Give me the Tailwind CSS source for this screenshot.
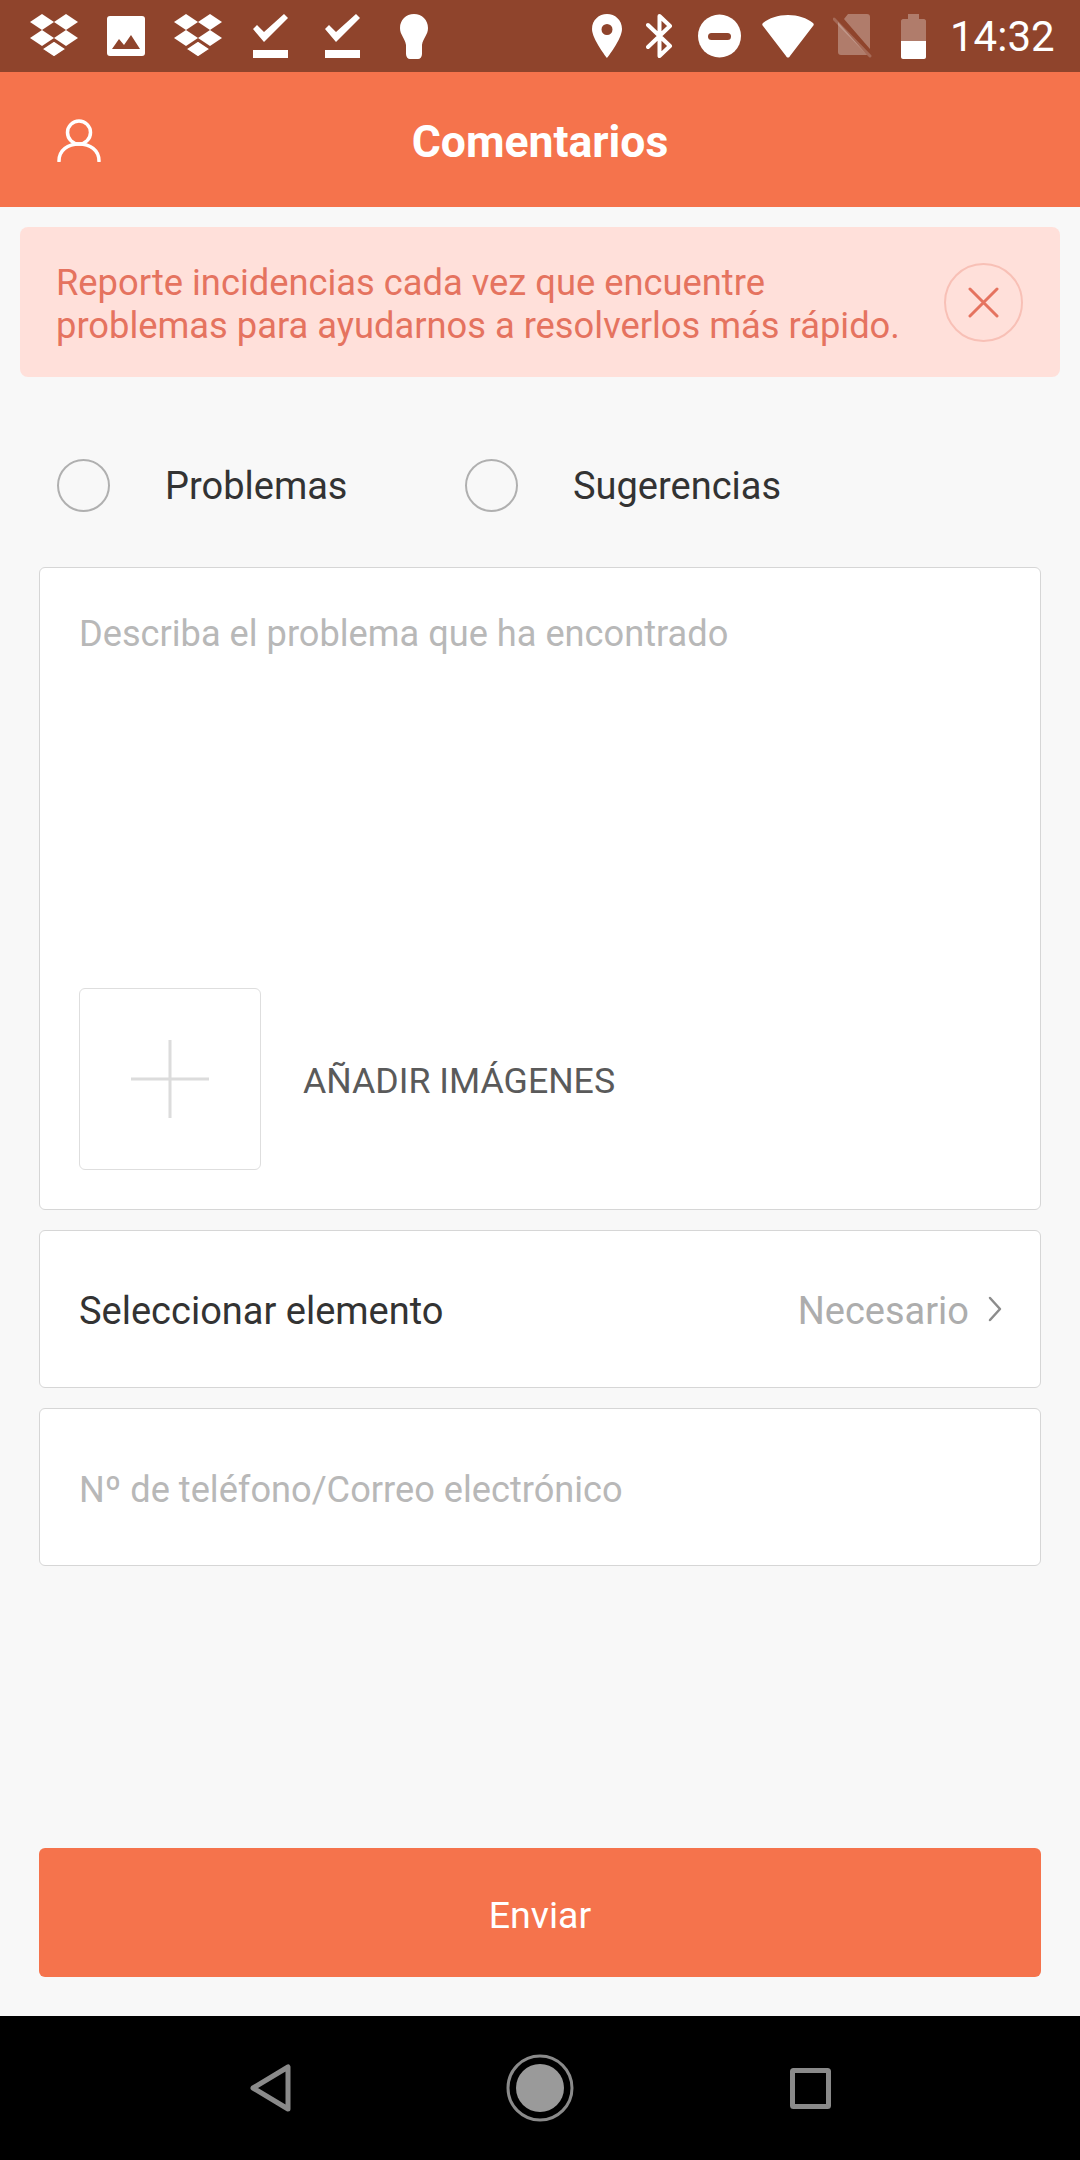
<!DOCTYPE html>
<html lang="es">
<head>
<meta charset="utf-8">
<script src="https://cdn.jsdelivr.net/npm/@tailwindcss/browser@4"></script>
</head>
<body class="m-0">
<div class="w-[1080px] h-[2160px] overflow-hidden flex flex-col bg-[#f8f8f8] font-['Roboto',sans-serif]">
  <!-- status bar -->
  <div class="h-[72px] shrink-0 bg-[#8f442c] flex items-center text-white relative">
    <svg class="ml-[30px] w-[48px] h-[44px]" viewBox="0 0 48 44" fill="#fff"><path d="M0 8 12 0l12 8-12 8zM24 8 36 0l12 8-12 8zM0 24l12-8 12 8-12 8zM24 24l12-8 12 8-12 8z"/><path d="M12 35l12-8 12 8-12 8z" stroke="#8f442c" stroke-width="1.4"/></svg>
    <svg class="ml-[29px] w-[38px] h-[40px]" viewBox="0 0 38 40"><rect width="38" height="40" rx="3" fill="#fff"/><path d="M5 33 12 23l5 6 7-10 9 14z" fill="#8f442c"/></svg>
    <svg class="ml-[29px] w-[48px] h-[44px]" viewBox="0 0 48 44" fill="#fff"><path d="M0 8 12 0l12 8-12 8zM24 8 36 0l12 8-12 8zM0 24l12-8 12 8-12 8zM24 24l12-8 12 8-12 8z"/><path d="M12 35l12-8 12 8-12 8z" stroke="#8f442c" stroke-width="1.4"/></svg>
    <svg class="ml-[31px] w-[35px] h-[44px]" viewBox="0 0 35 44" fill="#fff"><path d="M0 15l4-4 7 7L31 0l4 4-24 24z"/><rect y="36" width="35" height="8"/></svg>
    <svg class="ml-[37px] w-[35px] h-[44px]" viewBox="0 0 35 44" fill="#fff"><path d="M0 15l4-4 7 7L31 0l4 4-24 24z"/><rect y="36" width="35" height="8"/></svg>
    <svg class="ml-[40px] w-[28px] h-[45px]" viewBox="0 0 28 45" fill="#fff"><path d="M14 0C6 0 0 6 0 14c0 7 5 10 6 17v9c0 3 2 5 4 5h8c2 0 4-2 4-5v-9c1-7 6-10 6-17C28 6 22 0 14 0z"/></svg>
    <svg class="ml-[164px] w-[30px] h-[44px]" viewBox="0 0 30 44"><path fill="#fff" fill-rule="evenodd" d="M15 0C7 0 0 6 0 15c0 10 15 29 15 29s15-19 15-29C30 6 23 0 15 0zm0 10a5.500 5.500 0 1 1 0 11 5.500 5.500 0 0 1 0-11z"/></svg>
    <svg class="ml-[24px] w-[27px] h-[44px]" viewBox="0 0 27 44" fill="none" stroke="#fff" stroke-width="4" stroke-linecap="round" stroke-linejoin="round"><path d="M2 11 24 32 13.500 42V2L24 12 2 33"/></svg>
    <svg class="ml-[25px] w-[43px] h-[44px]" viewBox="0 0 43 44"><circle cx="21.500" cy="22" r="21.500" fill="#fff"/><rect x="10" y="19" width="23" height="7" rx="3.500" fill="#8f442c"/></svg>
    <svg class="ml-[21px] w-[52px] h-[43px]" viewBox="0 0 52 43"><path fill="#fff" d="M26 0C16 0 7 3 1 8c-1 1-1 2 0 3l23 30c1 2 3 2 4 0l23-30c1-1 1-2 0-3C45 3 36 0 26 0z"/></svg>
    <svg class="ml-[19px] w-[39px] h-[44px]" viewBox="0 0 39 44"><path fill="#fff" fill-opacity=".3" d="M15 0h19c2 0 3 1 3 3v32L11 5zM5 8l29 33H8c-2 0-3-1-3-3z"/><path d="M1 5 37 42" stroke="#fff" stroke-opacity=".2" stroke-width="3" stroke-linecap="round"/></svg>
    <svg class="ml-[29px] w-[25px] h-[45px]" viewBox="0 0 25 45"><path fill="#fff" fill-opacity=".3" d="M7 0h11v5h5c1 0 2 1 2 2v20H0V7c0-1 1-2 2-2h5z"/><path fill="#fff" d="M0 27h25v16c0 1-1 2-2 2H2c-1 0-2-1-2-2z"/></svg>
    <span class="ml-[24px] pt-[2px] text-[42px] leading-none">14:32</span>
  </div>
  <!-- header -->
  <div class="h-[135px] shrink-0 bg-[#f5734c] flex items-center justify-center relative">
    <svg class="absolute left-[57px] top-[46px] w-[44px] h-[44px]" viewBox="0 0 44 44" fill="none" stroke="#fff" stroke-width="3.500" stroke-linecap="round"><circle cx="22" cy="14.500" r="11.500"/><path d="M2 43C2 32 11 26 22 26s20 6 20 17"/></svg>
    <span class="pt-[5px] text-white font-bold text-[44.500px] leading-none">Comentarios</span>
  </div>
  <!-- alert -->
  <div class="mt-[20px] mx-[20px] h-[150px] shrink-0 rounded-[8px] bg-[#ffe0da] flex items-center justify-between pl-[36px] pr-[37px]">
    <p class="pt-[3px] text-[36.300px] leading-[43px] text-[#e5735f] whitespace-nowrap">Reporte incidencias cada vez que encuentre<br>problemas para ayudarnos a resolverlos más rápido.</p>
    <div class="w-[79px] h-[79px] rounded-full border-2 border-[#f8c0b6] flex items-center justify-center shrink-0">
      <svg class="w-[31px] h-[31px]" viewBox="0 0 31 31" stroke="#e5735f" stroke-width="3" stroke-linecap="round"><path d="M2 2l27 27M29 2 2 29"/></svg>
    </div>
  </div>
  <!-- radios -->
  <div class="mt-[81px] h-[54px] shrink-0 flex items-center pl-[57px]">
    <div class="w-[53px] h-[53px] rounded-full border-2 border-[#b0b0b0] shrink-0"></div>
    <span class="ml-[55px] pt-[3px] w-[300px] text-[38px] text-[#333333]">Problemas</span>
    <div class="w-[53px] h-[53px] rounded-full border-2 border-[#b0b0b0] shrink-0"></div>
    <span class="ml-[55px] pt-[3px] text-[38px] text-[#333333]">Sugerencias</span>
  </div>
  <!-- description card -->
  <div class="mt-[55px] mx-[39px] h-[643px] shrink-0 bg-white border border-[#d6d6d6] rounded-[6px] flex flex-col justify-between pl-[39px] pt-[45px] pb-[39px]">
    <p class="text-[36.200px] leading-[41px] text-[#b8b8b8]">Describa el problema que ha encontrado</p>
    <div class="flex items-center">
      <div class="w-[182px] h-[182px] rounded-[6px] border border-[#dedede] flex items-center justify-center shrink-0">
        <svg class="w-[78px] h-[78px]" viewBox="0 0 78 78" stroke="#dcdcdc" stroke-width="3"><path d="M39 0v78M0 39h78"/></svg>
      </div>
      <span class="ml-[42px] pt-[5px] text-[35.700px] text-[#5a5a5a]">AÑADIR IMÁGENES</span>
    </div>
  </div>
  <!-- select card -->
  <div class="mt-[20px] mx-[39px] h-[158px] shrink-0 bg-white border border-[#d6d6d6] rounded-[6px] flex items-center justify-between pl-[39px] pr-[38px]">
    <span class="pt-[5px] text-[38px] text-[#333333]">Seleccionar elemento</span>
    <div class="flex items-center">
      <span class="pt-[5px] mr-[1px] text-[38px] text-[#adadad]">Necesario</span>
      <svg class="ml-[18px] w-[14px] h-[26px]" viewBox="0 0 14 26" fill="none" stroke="#8c8c8c" stroke-width="2.500" stroke-linecap="round" stroke-linejoin="round"><path d="M2 2l10 11L2 24"/></svg>
    </div>
  </div>
  <!-- contact card -->
  <div class="mt-[20px] mx-[39px] h-[158px] shrink-0 bg-white border border-[#d6d6d6] rounded-[6px] flex items-center pl-[39px]">
    <span class="pt-[6px] text-[36.200px] text-[#b8b8b8]">Nº de teléfono/Correo electrónico</span>
  </div>
  <!-- submit -->
  <div class="mt-[282px] mx-[39px] h-[129px] shrink-0 bg-[#f5734c] rounded-[6px] flex items-center justify-center">
    <span class="pt-[5px] text-white text-[37.500px]">Enviar</span>
  </div>
  <!-- nav bar -->
  <div class="mt-[39px] h-[144px] shrink-0 bg-black flex items-center relative">
    <svg class="ml-[250px] w-[41px] h-[48px]" viewBox="0 0 41 48" fill="none" stroke="#8a8a8a" stroke-width="5" stroke-linejoin="round"><path d="M38 3v42L3 24z"/></svg>
    <svg class="ml-[215px] w-[68px] h-[68px]" viewBox="0 0 68 68"><circle cx="34" cy="34" r="32" fill="none" stroke="#8a8a8a" stroke-width="3"/><circle cx="34" cy="34" r="24" fill="#9a9a9a"/></svg>
    <svg class="ml-[216px] w-[41px] h-[41px]" viewBox="0 0 41 41" fill="none" stroke="#8a8a8a" stroke-width="5" stroke-linejoin="round"><rect x="2.500" y="2.500" width="36" height="36" rx="1"/></svg>
  </div>
</div>
</body>
</html>
